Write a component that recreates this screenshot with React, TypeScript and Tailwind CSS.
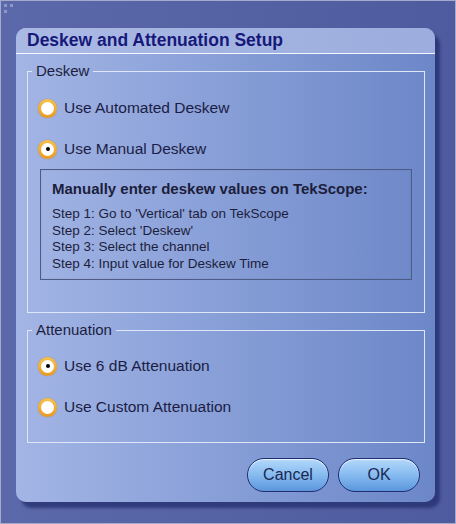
import { useState } from 'react'

const font = { fontFamily: '"Liberation Sans", Arial, sans-serif' }

function Radio({ checked, label, onClick }: { checked: boolean; label: string; onClick: () => void }) {
  return (
    <button onClick={onClick} className="flex items-center h-[20px] gap-[7px] text-left -ml-[2px]">
      <span className="w-[19px] h-[19px] rounded-full bg-gradient-to-b from-[#f7c24a] to-[#e99a1e] p-[3px] shadow-[0_0_1px_#b06a10]">
        <span className="flex w-full h-full items-center justify-center rounded-full bg-white">
          {checked && <span className="w-[4px] h-[4px] rounded-full bg-black" />}
        </span>
      </span>
      <span className="text-[15.5px] text-[#1b1d45] leading-none">{label}</span>
    </button>
  )
}

function PillButton({ label }: { label: string }) {
  return (
    <button className="w-[82px] h-[34px] rounded-full border-[1.5px] border-[#1f2d72] bg-gradient-to-b from-[#b3d8fb] via-[#86bbf0] to-[#5c96dc] text-[16px] text-[#1a2850] shadow-[inset_0_1px_1px_rgba(255,255,255,0.7)]">
      {label}
    </button>
  )
}

export default function App() {
  const [deskew, setDeskew] = useState<'auto' | 'manual'>('manual')
  const [atten, setAtten] = useState<'6db' | 'custom'>('6db')

  return (
    <div
      className="w-[456px] h-[524px] border border-[#a3aacb] bg-gradient-to-r from-[#5b69aa] to-[#4e5c9f] relative"
      style={font}
    >
      {/* grip dots */}
      <div className="absolute left-[3px] top-[3px] grid grid-cols-2 gap-[3px]">
        <span className="w-[3px] h-[3px] bg-[#8e98c4]" />
        <span className="w-[3px] h-[3px] bg-[#8e98c4]" />
        <span className="w-[3px] h-[3px] bg-[#8e98c4]" />
      </div>

      <div className="ml-[15px] mt-[27px] w-[419px] h-[474px] rounded-[10px] flex flex-col bg-gradient-to-r from-[#a3b5e5] to-[#6c87c8] shadow-[5px_6px_3px_rgba(35,45,110,0.75)] overflow-hidden">
        {/* title */}
        <div className="h-[26px] flex items-center pl-[11px] bg-gradient-to-r from-[#aab9e4] to-[#9cadde] border-b border-[#f4f7ff] shrink-0">
          <span className="text-[17.5px] font-bold text-[#17197a] leading-none pt-[1px]">Deskew and Attenuation Setup</span>
        </div>

        <div className="flex flex-col pl-[11px] pr-[10px] pt-[9px]">
          <fieldset className="border border-[#dfe6f7] px-[12px] pb-[32px] flex flex-col">
            <legend className="-ml-[8px] px-[4px] text-[15px] leading-[16px] text-[#1c1e40]">Deskew</legend>
            <div className="pt-[19px] flex flex-col gap-[21px]">
              <Radio checked={deskew === 'auto'} label="Use Automated Deskew" onClick={() => setDeskew('auto')} />
              <Radio checked={deskew === 'manual'} label="Use Manual Deskew" onClick={() => setDeskew('manual')} />
            </div>
            <div className="mt-[10px] h-[111px] border border-[#4d5b86] shadow-[inset_0_0_1px_rgba(40,50,90,0.4)] pl-[11px] pt-[10px] text-[#1c1e3c]">
              <div className="text-[15px] font-bold leading-[18px]">Manually enter deskew values on TekScope:</div>
              <div className="mt-[8px] text-[13.5px] leading-[16.5px]">
                <div>Step 1: Go to 'Vertical' tab on TekScope</div>
                <div>Step 2: Select 'Deskew'</div>
                <div>Step 3: Select the channel</div>
                <div>Step 4: Input value for Deskew Time</div>
              </div>
            </div>
          </fieldset>

          <fieldset className="mt-[9px] border border-[#dfe6f7] px-[12px] pb-[25px] flex flex-col">
            <legend className="-ml-[8px] px-[4px] text-[15px] leading-[16px] text-[#1c1e40]">Attenuation</legend>
            <div className="pt-[18px] flex flex-col gap-[21px]">
              <Radio checked={atten === '6db'} label="Use 6 dB Attenuation" onClick={() => setAtten('6db')} />
              <Radio checked={atten === 'custom'} label="Use Custom Attenuation" onClick={() => setAtten('custom')} />
            </div>
          </fieldset>

          <div className="mt-[15px] flex justify-end gap-[9px] pr-[5px]">
            <PillButton label="Cancel" />
            <PillButton label="OK" />
          </div>
        </div>
      </div>
    </div>
  )
}
